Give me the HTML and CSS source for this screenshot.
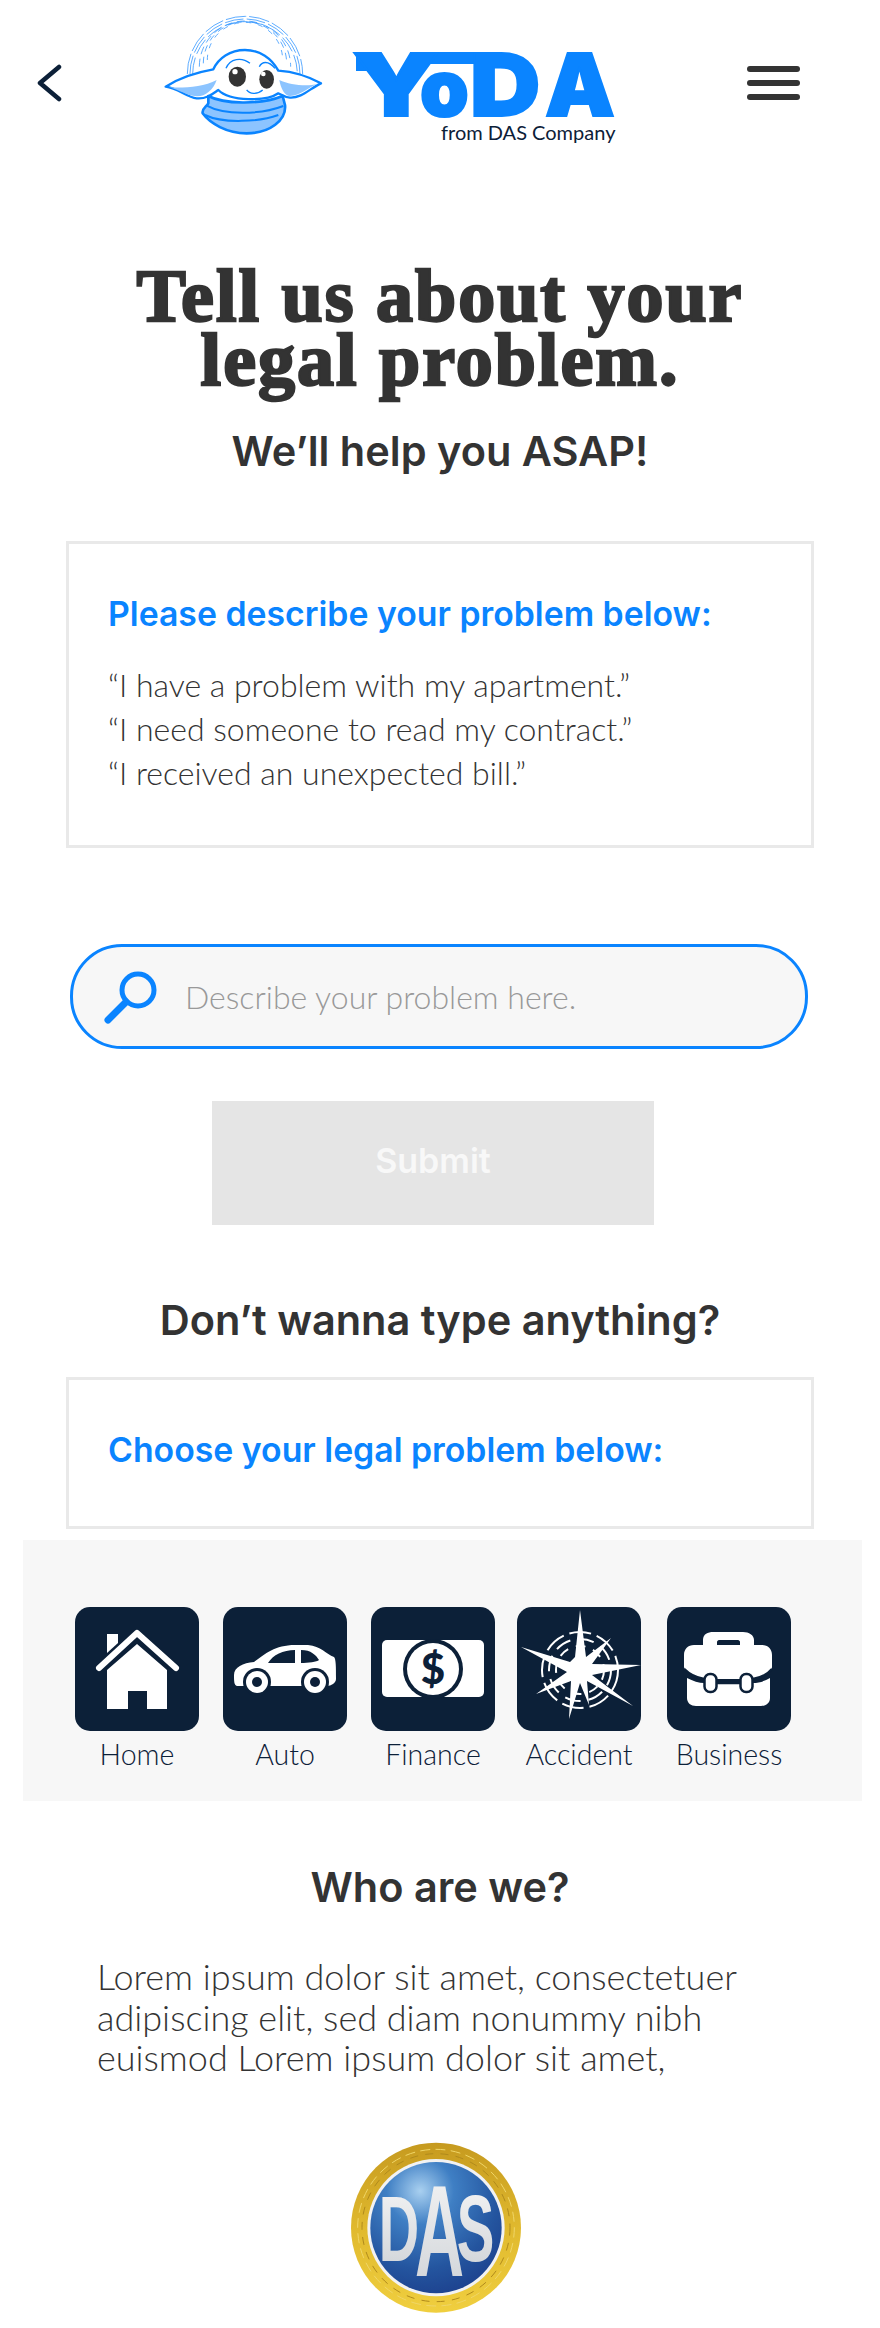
FILE: index.html
```html
<!DOCTYPE html>
<html lang="en">
<head>
    <meta charset="UTF-8">
    <meta name="viewport" content="width=device-width, initial-scale=1.0">
    <title>YoDA - Tell us about your legal problem</title>
    <link rel="stylesheet" href="styles.css">
</head>
<body>
    <header class="topbar">
        <svg class="back" viewBox="0 0 25 38"><path d="M22 3 L3 19 L22 35" fill="none" stroke="#0c2038" stroke-width="4.5" stroke-linecap="round" stroke-linejoin="round"/></svg>
        <svg class="logo" viewBox="160 0 460 166">
            <g transform="translate(150 0) scale(.3333)">
                <g fill="none" stroke="#3d9bff" stroke-width="2.5">
                    <path stroke-dasharray="62 9" d="M112 222 A173 173 0 0 1 458 222"/>
                    <path stroke-dasharray="56 10" d="M120 222 A165 165 0 0 1 450 222"/>
                    <path stroke-dasharray="50 12" d="M128 222 A157 157 0 0 1 442 222"/>
                    <path stroke-dasharray="24 14" d="M148 200 A137 137 0 0 1 422 200"/>
                    <path stroke-dasharray="20 16" d="M160 190 A125 125 0 0 1 410 190"/>
                    <path stroke-dasharray="16 20" d="M172 180 A113 113 0 0 1 398 180"/>
                </g>
                <path d="M47 260 C90 232 150 215 190 208 C205 175 240 150 285 150 C330 150 365 175 385 212 C430 215 480 232 513 250 C480 265 455 295 420 293 C405 292 395 285 385 280 C350 305 240 305 205 270 C190 280 170 298 140 295 C110 292 85 265 47 260 Z" fill="#fff" stroke="#0a84ff" stroke-width="7" stroke-linejoin="round"/>
                <path d="M58 262 C100 264 160 262 200 240 C190 270 165 290 140 289 C110 288 85 268 58 262 Z" fill="#8cc4ff"/>
                <path d="M502 252 C470 260 420 255 388 240 C392 265 405 288 420 288 C450 288 475 262 502 252 Z" fill="#8cc4ff"/>
                <path d="M175 288 C220 312 330 316 398 288 L405 315 C410 360 360 400 290 400 C230 400 180 370 158 340 C155 325 170 320 175 310 Z" fill="#8cc4ff" stroke="#0a84ff" stroke-width="8" stroke-linejoin="round"/>
                <path d="M172 318 C220 345 330 345 400 318 M165 345 C220 372 330 365 385 345" fill="none" stroke="#0a84ff" stroke-width="6"/>
                <ellipse cx="262" cy="230" rx="26" ry="30" fill="#333"/>
                <circle cx="255" cy="215" r="8" fill="#fff"/>
                <ellipse cx="350" cy="238" rx="22" ry="28" fill="#333"/>
                <circle cx="340" cy="222" r="7" fill="#fff"/>
                <path d="M228 205 C240 175 275 170 300 190 M328 200 C335 185 355 180 375 205 M290 270 C300 285 325 282 338 270" fill="none" stroke="#0a84ff" stroke-width="4"/>
            </g>
            <rect x="356" y="52" width="20" height="19" fill="#0a84ff"/>
            <rect x="420" y="52" width="70" height="12" fill="#0a84ff"/>
            <text class="wordmark" transform="translate(352 116) scale(1.3 1)" font-size="87">Y</text>
            <text class="wordmark o" transform="translate(420 116)" font-size="78">o</text>
            <text class="wordmark" transform="translate(470 116) scale(1.12 1)" font-size="87">D</text>
            <text class="wordmark" transform="translate(545 116) scale(1.01 1)" font-size="87">A</text>
            <text class="logo-sub" x="441" y="140">from DAS Company</text>
        </svg>
        <div class="menu"><span></span><span></span><span></span></div>
    </header>

    <h1 class="title">Tell us about your<br>legal problem.</h1>
    <h2 class="subtitle">We’ll help you ASAP!</h2>

    <section class="card">
        <h3>Please describe your problem below:</h3>
        <p>“I have a problem with my apartment.”</p>
        <p>“I need someone to read my contract.”</p>
        <p>“I received an unexpected bill.”</p>
    </section>

    <div class="search">
        <svg viewBox="0 0 60 60"><circle cx="37" cy="23" r="16" fill="none" stroke="#0a84ff" stroke-width="5"/><path d="M25 35 L7 53" stroke="#0a84ff" stroke-width="7" stroke-linecap="round"/></svg>
        <span>Describe your problem here.</span>
    </div>

    <div class="submit">Submit</div>

    <h2 class="subtitle dont">Don’t wanna type anything?</h2>

    <section class="card card-choose">
        <h3>Choose your legal problem below:</h3>
    </section>

    <section class="categories">
        <div class="cat">
            <svg viewBox="0 0 124 124">
                <rect width="124" height="124" rx="15" fill="#0c2038"/>
                <path d="M32 27 H43 V36 L32 46 Z" fill="#fff"/>
                <path d="M62 37 L92 63 V102 H72 V84 H53 V102 H32 V63 Z" fill="#fff"/>
                <path d="M24 61 L62 26 L101 61" fill="none" stroke="#fff" stroke-width="6" stroke-linecap="round" stroke-linejoin="round"/>
            </svg>
            <span>Home</span>
        </div>
        <div class="cat">
            <svg viewBox="0 0 124 124">
                <rect width="124" height="124" rx="15" fill="#0c2038"/>
                <path d="M11 68 C11 60 20 56 31 55 C42 47 52 38 72 38 H85 C98 39 103 47 111 50 C113 52 113 60 113 72 C113 76 108 79 104 79 H14 C11 78 11 74 11 68 Z" fill="#fff"/>
                <path d="M45 56 C50 48 60 43 72 43 V56 Z M78 43 C88 43 93 48 96 53 C94 55 85 56 78 56 Z" fill="#0c2038"/>
                <circle cx="34" cy="75" r="14" fill="#0c2038"/><circle cx="34" cy="75" r="11" fill="#fff"/><circle cx="34" cy="75" r="5" fill="#0c2038"/>
                <circle cx="92" cy="75" r="14" fill="#0c2038"/><circle cx="92" cy="75" r="11" fill="#fff"/><circle cx="92" cy="75" r="5" fill="#0c2038"/>
            </svg>
            <span>Auto</span>
        </div>
        <div class="cat">
            <svg viewBox="0 0 124 124">
                <rect width="124" height="124" rx="15" fill="#0c2038"/>
                <rect x="11" y="33" width="102" height="57" rx="5" fill="#fff"/>
                <circle cx="62" cy="62" r="30" fill="#0c2038"/>
                <circle cx="62" cy="62" r="26" fill="#fff"/>
                <text class="dollar" x="62" y="77" font-size="42">$</text>
            </svg>
            <span>Finance</span>
        </div>
        <div class="cat">
            <svg viewBox="0 0 124 124">
                <rect width="124" height="124" rx="15" fill="#0c2038"/>
                <g fill="none" stroke="#fff" stroke-width="2">
                    <circle cx="63" cy="63" r="38" stroke-dasharray="22 6"/>
                    <circle cx="63" cy="63" r="31" stroke-dasharray="16 8"/>
                    <circle cx="63" cy="63" r="24" stroke-dasharray="10 8"/>
                </g>
                <path d="M63 3 L69 50 L94 31 L75 57 L124 58 L75 68 L116 99 L70 74 L72 98 L63 76 L52 112 L54 74 L19 87 L50 65 L4 40 L53 55 L58 50 Z" fill="#fff"/>
            </svg>
            <span>Accident</span>
        </div>
        <div class="cat">
            <svg viewBox="0 0 124 124">
                <rect width="124" height="124" rx="15" fill="#0c2038"/>
                <path d="M36 38 V33 C36 27 41 25 46 25 H76 C82 25 87 28 87 33 V38 H95 C101 38 105 42 105 48 V60 C105 64 95 70 86 72 H37 C28 70 17 64 17 60 V48 C17 42 21 38 27 38 Z" fill="#fff"/>
                <path d="M50 38 V35 C50 34 51 33 52 33 H71 C72 33 73 34 73 35 V38 Z" fill="#0c2038"/>
                <path d="M20 71 C26 74 32 76 37 76 H86 C92 76 98 74 103 71 V91 C103 96 99 99 94 99 H29 C24 99 20 96 20 91 Z" fill="#fff"/>
                <path d="M17 62 C23 68 30 71 37 72 M86 72 C93 71 100 68 105 62 M49 76 H73" fill="none" stroke="#0c2038" stroke-width="2.5"/>
                <rect x="37.5" y="67" width="12" height="18" rx="5.5" fill="#fff" stroke="#0c2038" stroke-width="2.5"/>
                <rect x="73.5" y="67" width="12" height="18" rx="5.5" fill="#fff" stroke="#0c2038" stroke-width="2.5"/>
            </svg>
            <span>Business</span>
        </div>
    </section>

    <h2 class="subtitle who">Who are we?</h2>
    <p class="about">Lorem ipsum dolor sit amet, consectetuer<br>adipiscing elit, sed diam nonummy nibh<br>euismod Lorem ipsum dolor sit amet,</p>

    <svg class="das" viewBox="0 0 720 654">
        <defs>
            <linearGradient id="gold" x1="0" y1="0" x2="0" y2="1">
                <stop offset="0" stop-color="#c69a1f"/>
                <stop offset=".5" stop-color="#e0b92e"/>
                <stop offset="1" stop-color="#f0cf3f"/>
            </linearGradient>
            <radialGradient id="blue" cx=".38" cy=".22" r=".85">
                <stop offset="0" stop-color="#a9d0f0"/>
                <stop offset=".3" stop-color="#3f7fc4"/>
                <stop offset=".7" stop-color="#24559f"/>
                <stop offset="1" stop-color="#1c3f8c"/>
            </radialGradient>
            <linearGradient id="silver" x1="0" y1="0" x2="0" y2="1">
                <stop offset="0" stop-color="#f6f6f6"/>
                <stop offset="1" stop-color="#cdd1d6"/>
            </linearGradient>
        </defs>
        <circle cx="348" cy="350" r="255" fill="url(#gold)"/>
        <circle cx="348" cy="350" r="235" fill="none" stroke="#f0d668" stroke-width="3" stroke-dasharray="30 16"/>
        <circle cx="348" cy="350" r="222" fill="none" stroke="#b08a1c" stroke-width="3" stroke-dasharray="24 22"/>
        <circle cx="348" cy="350" r="206" fill="#f2f2f2"/>
        <circle cx="348" cy="350" r="197" fill="url(#blue)"/>
        <text class="das-letter" fill="url(#silver)" transform="translate(176 450) scale(.6 1)" font-size="280">D</text>
        <text class="das-letter" fill="url(#silver)" transform="translate(285 495) scale(.52 1)" font-size="392">A</text>
        <text class="das-letter" fill="url(#silver)" transform="translate(410 450) scale(.6 1)" font-size="282">S</text>
    </svg>
</body>
</html>
```

FILE: styles.css
```css
html, body {
    margin: 0;
    padding: 0;
}

body {
    width: 880px;
    height: 2328px;
    overflow: hidden;
    background: #fff;
    color: #333;
    font-family: Lato, "Open Sans", sans-serif;
}

.topbar {
    display: flex;
    align-items: center;
    height: 166px;
    padding: 0 80px 0 37px;
}

.back {
    width: 25px;
    height: 38px;
}

.logo {
    width: 460px;
    height: 166px;
    margin-left: 98px;
}

.wordmark {
    font-family: Inter, sans-serif;
    font-weight: 900;
    fill: #0a84ff;
    stroke: #0a84ff;
    stroke-width: 2px;
}

.logo-sub {
    font-family: Lato, sans-serif;
    font-size: 20px;
    fill: #0c2038;
}

.menu {
    display: flex;
    flex-direction: column;
    gap: 8px;
    margin-left: auto;
    width: 53px;
}

.menu span {
    height: 6px;
    border-radius: 3px;
    background: #333;
}

.title {
    margin: 98px 0 0;
    font-family: "Liberation Serif", serif;
    font-size: 74px;
    font-weight: 700;
    letter-spacing: 2px;
    line-height: 64px;
    text-align: center;
    -webkit-text-stroke: 2.4px #333;
}

.subtitle {
    margin: 34px 0 0;
    font-family: Inter, sans-serif;
    font-size: 41.5px;
    font-weight: 600;
    line-height: 50px;
    text-align: center;
}

.card {
    margin: 65px 66px 0;
    padding: 48px 39px 0;
    height: 307px;
    box-sizing: border-box;
    border: 3px solid #e9e9e9;
}

.card h3 {
    margin: 0 0 27px;
    color: #0a84ff;
    font-family: Inter, sans-serif;
    font-size: 33.8px;
    font-weight: 600;
    line-height: 44px;
}

.card p {
    margin: 0;
    font-size: 32px;
    font-weight: 300;
    line-height: 44px;
}

.search {
    display: flex;
    align-items: center;
    gap: 24px;
    margin: 96px 72px 0 70px;
    padding-left: 28px;
    height: 105px;
    box-sizing: border-box;
    border: 3px solid #0a84ff;
    border-radius: 52px;
    background: #f7f7f7;
    color: #999;
    font-size: 32px;
    font-weight: 300;
}

.search svg {
    width: 60px;
    height: 60px;
}

.submit {
    display: flex;
    align-items: center;
    justify-content: center;
    width: 442px;
    height: 124px;
    padding-bottom: 5px;
    box-sizing: border-box;
    margin: 52px 0 0 212px;
    background: #e5e5e5;
    color: #f8f8f8;
    font-family: Inter, sans-serif;
    font-size: 34px;
    font-weight: 600;
}

.dont {
    margin-top: 70px;
}

.card-choose {
    height: 152px;
    margin-top: 32px;
    padding-top: 48px;
}

.card-choose h3 {
    margin: 0;
}

.categories {
    display: flex;
    margin: 11px 18px 0 23px;
    padding: 67px 0 0 52px;
    height: 261px;
    box-sizing: border-box;
    background: #f7f7f7;
}

.cat {
    display: flex;
    flex-direction: column;
    align-items: center;
    width: 124px;
    margin-right: 24px;
    color: #0c2038;
    font-size: 28.5px;
    font-weight: 300;
    line-height: 46px;
}

.cat svg {
    width: 124px;
    height: 124px;
}

.cat:nth-child(3) {
    margin-right: 22px;
}

.cat:nth-child(4) {
    margin-right: 26px;
}

.dollar {
    fill: #0c2038;
    font-family: Lato, sans-serif;
    font-weight: 900;
    text-anchor: middle;
}

.who {
    margin-top: 61px;
    text-align: center;
}

.about {
    margin: 44px 0 0 97px;
    font-size: 36px;
    font-weight: 300;
    line-height: 40.5px;
}

.das {
    display: block;
    width: 240px;
    height: 218px;
    margin: 33px 0 0 320px;
}

.das-letter {
    font-family: "Liberation Sans", sans-serif;
    font-weight: 700;
}
```
